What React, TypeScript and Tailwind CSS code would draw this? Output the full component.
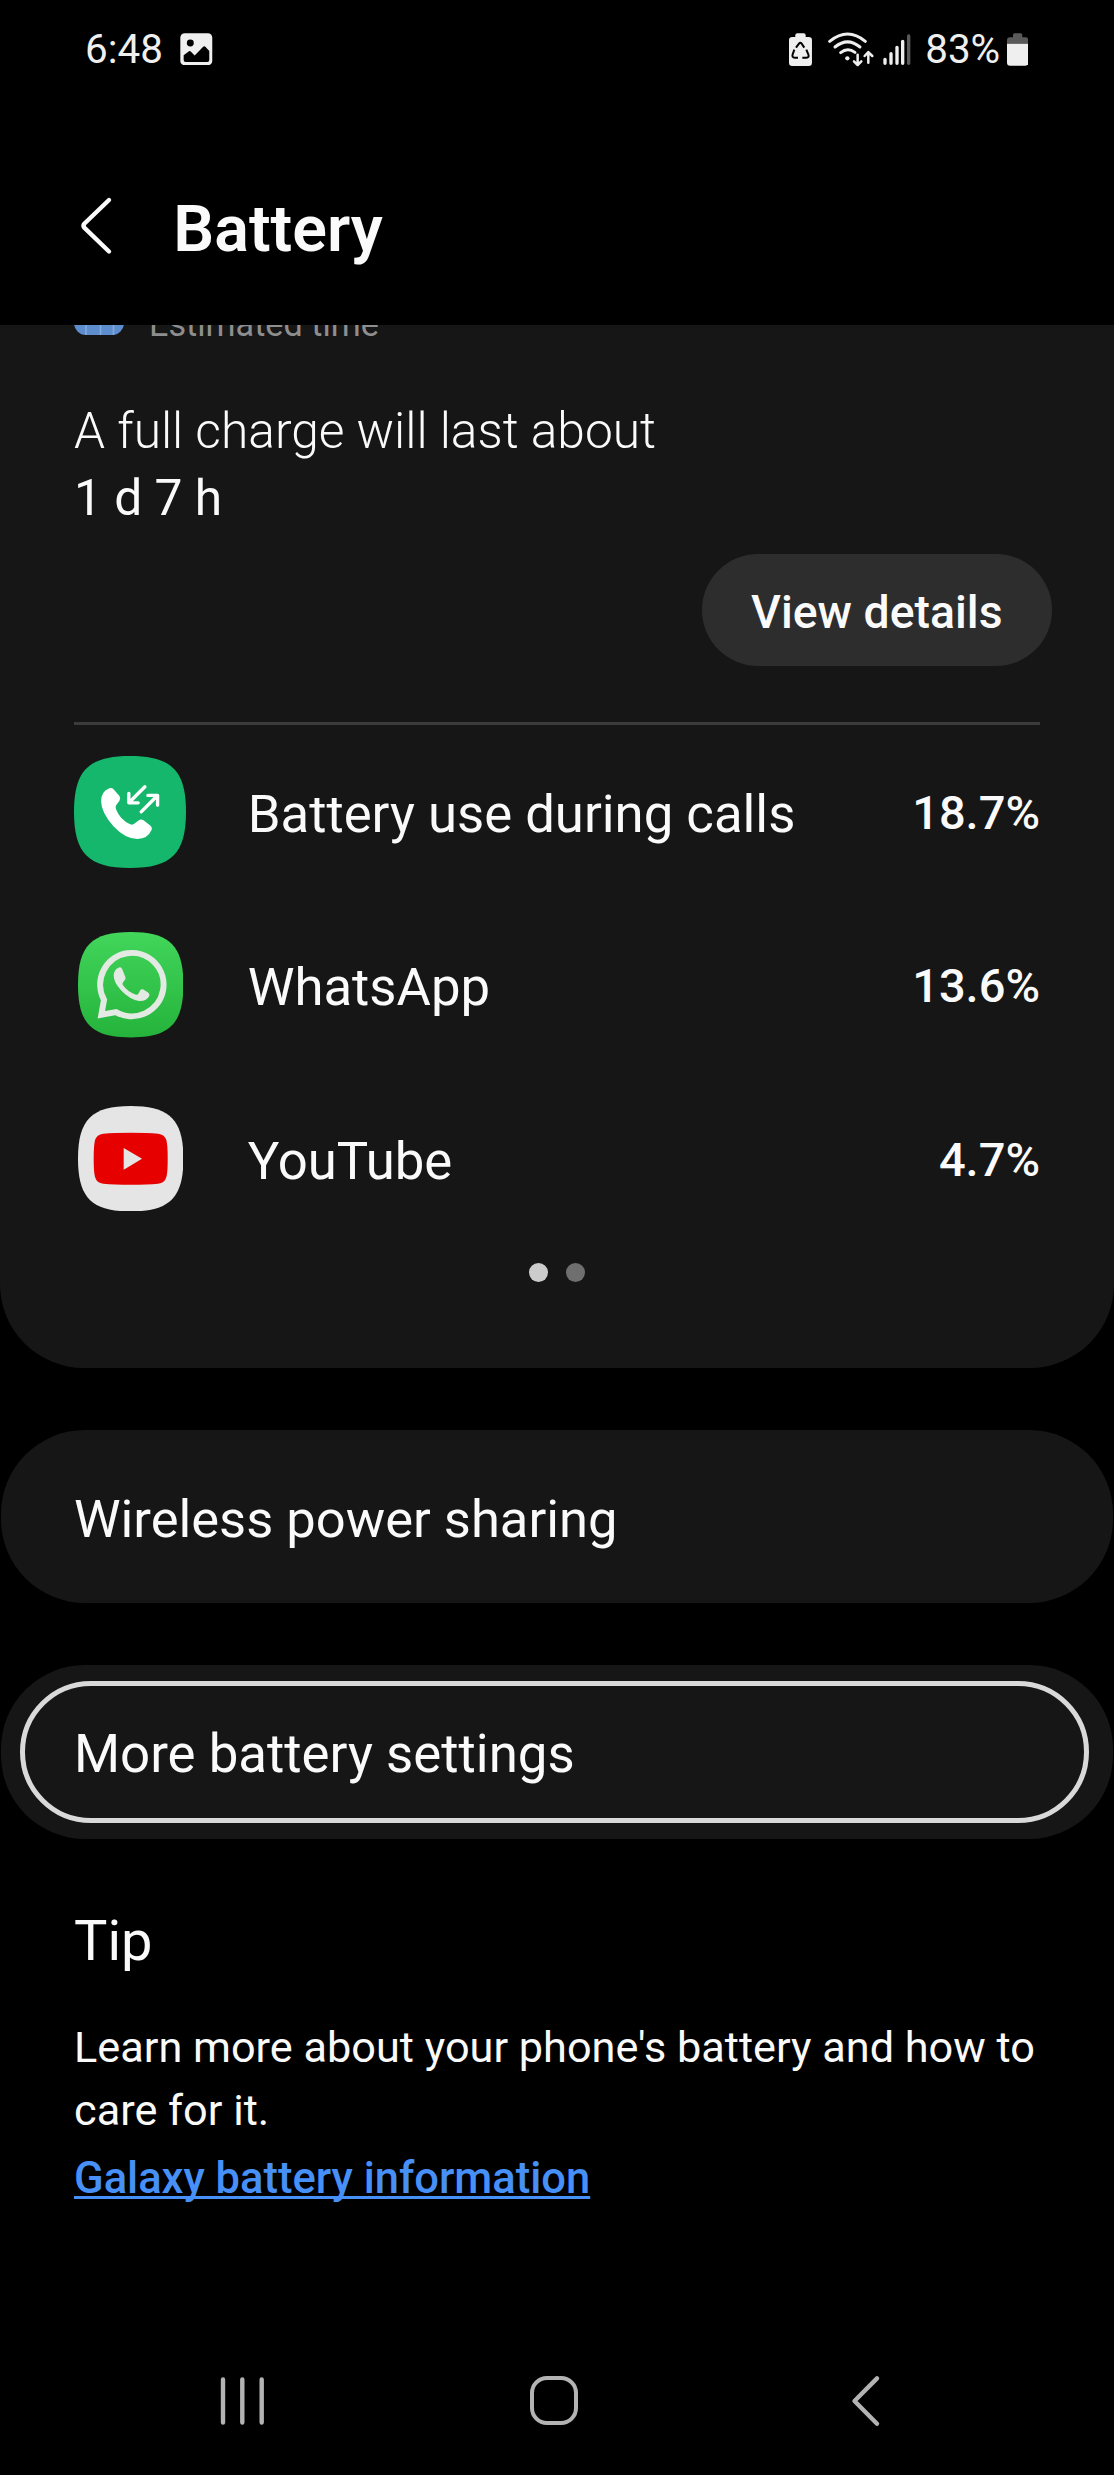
import type { ReactNode } from "react";

const SQUIRCLE = "M0 50C0 13 13 0 50 0S100 13 100 50 87 100 50 100 0 87 0 50Z";

function StatusBar() {
  return (
    <div className="flex h-[98px] items-center justify-between pl-[85px] pr-[85.7px] text-[40.4px] leading-[48px] text-[#efefef]">
      <div className="flex items-center">
        <span className="w-[95px] pt-[2px]">6:48</span>
        <svg className="h-[32.6px] w-[32.6px]" viewBox="390 68 98 98">
          <rect x="391" y="69" width="96" height="96" rx="13" fill="#efefef" />
          <circle cx="421" cy="98" r="10.5" fill="#000" />
          <path d="M401 135L417 123Q420 121 423 124L434 136 459 110Q463 106 467 110L478 122V149Q478 155 472 155H407Q401 155 401 149Z" fill="#000" />
        </svg>
      </div>
      <div className="flex items-center">
        <svg className="h-[33px] w-[23.3px]" viewBox="87 68 70 99">
          <rect x="87" y="80" width="69" height="87" rx="10" fill="#efefef" />
          <rect x="106" y="69" width="31" height="20" rx="6" fill="#efefef" />
          <g fill="none" stroke="#000" strokeWidth="6">
            <path d="M108 112L117 100Q121 95 125 100L133 112" />
            <path d="M103 118L98 132Q95 142 104 142H114" />
            <path d="M139 118L145 132Q149 142 139 142H127" />
          </g>
        </svg>
        <svg className="ml-[14.4px] h-[36.7px] w-[48.3px]" viewBox="200 62 145 110" fill="none" stroke="#efefef" strokeLinecap="round">
          <g strokeWidth="9">
            <path d="M208 93Q262 49 315 93" />
            <path d="M224 110Q262 79 299 110" />
            <path d="M241 127Q262 110 284 126" />
          </g>
          <circle cx="261" cy="144" r="6.5" fill="#efefef" stroke="none" />
          <path d="M292 133V163M281 153L292 164 303 153M324 157V127M313 137L324 125 336 137" strokeWidth="7.5" strokeLinejoin="round" />
        </svg>
        <svg className="ml-[7px] h-[33px] w-[30px]" viewBox="366 67 90 99" fill="none" stroke="#efefef" strokeWidth="10" strokeLinecap="round">
          <path d="M375 146V158M393 129V158M411 110V158M428 92V158" />
          <path d="M446 76V158" stroke="#5a5a5a" />
        </svg>
        <span className="ml-[13px] w-[75px] pt-[2px]">83%</span>
        <svg className="ml-[6.8px] h-[33px] w-[21.3px]" viewBox="741 66 64 99">
          <path d="M741 98V88Q741 79 750 79H759V72Q759 67 764 67H782Q787 67 787 72V79H796Q805 79 805 88V98Z" fill="#5a5a5a" />
          <path d="M741 98H805V155Q805 164 796 164H750Q741 164 741 155Z" fill="#efefef" />
        </svg>
      </div>
    </div>
  );
}

function CallsIcon() {
  return (
    <svg className="h-[112px] w-[112px]" viewBox="72 77 335 335">
      <path d={SQUIRCLE} transform="translate(72 77) scale(3.35)" fill="#15b76c" />
      <path
        d="M176 174Q185 171 191 177L208 197Q213 204 208 211L198 224Q195 229 198 237 210 268 240 281 247 284 252 280L266 269Q273 264 281 270L300 285Q308 292 303 300 292 325 262 325 225 325 190 287 154 247 153 213 153 183 176 174Z"
        fill="#fff"
      />
      <path
        d="M284 169L237 216M236 189V217H264M273 244L321 196M293 195H322V224"
        fill="none"
        stroke="#fff"
        strokeWidth="10"
        strokeLinecap="round"
        strokeLinejoin="round"
      />
    </svg>
  );
}

function WhatsAppIcon() {
  return (
    <svg className="ml-[0.6px] h-[105.4px] w-[105.4px]" viewBox="82 605 316 316">
      <defs>
        <linearGradient id="wa" x1="0" y1="0" x2="0" y2="1">
          <stop offset="0" stopColor="#42d65b" />
          <stop offset="1" stopColor="#25b33b" />
        </linearGradient>
      </defs>
      <path d={SQUIRCLE} transform="translate(82 605) scale(3.16)" fill="url(#wa)" />
      <path d="M152 853L160 808A95 95 0 1 1 196 845Z" fill="none" stroke="#e3eae3" strokeWidth="18" />
      <path
        d="M203 712Q210 709 214 715L224 740Q226 745 222 750L216 757Q214 760 217 765 232 786 256 793 260 794 263 790L269 779Q272 775 277 777L293 787Q297 790 296 796 288 813 265 812 237 808 211 780 189 756 189 735 190 718 203 712Z"
        fill="#e3eae3"
      />
    </svg>
  );
}

function YouTubeIcon() {
  return (
    <svg className="ml-[0.6px] h-[105.4px] w-[105.4px]" viewBox="82 1126 316 316">
      <path d={SQUIRCLE} transform="translate(82 1126) scale(3.16)" fill="#e5e5e5" />
      <path
        d="M129 1284Q129 1244 133 1229 138 1211 158 1209 190 1206 240 1206T322 1209Q342 1211 347 1229 351 1244 351 1284T347 1339Q342 1357 322 1359 290 1362 240 1362T158 1359Q138 1357 133 1339 129 1324 129 1284Z"
        fill="#e60000"
      />
      <path d="M219 1252L274 1284 219 1317Z" fill="#e5e5e5" />
    </svg>
  );
}

function UsageRow({ icon, name, value }: { icon: ReactNode; name: string; value: string }) {
  return (
    <div className="flex h-[173.3px] items-center">
      <div className="flex w-[112px] justify-center">{icon}</div>
      <span className="ml-[61.7px] flex-1 pt-[5px] text-[52.7px] leading-[62px]">{name}</span>
      <span className="pt-[3px] text-[47px] font-[550] leading-[56px]">{value}</span>
    </div>
  );
}

export default function App() {
  return (
    <div className="flex h-[2475px] w-[1114px] flex-col overflow-hidden bg-black font-[Roboto,sans-serif] text-[#fafafa]">
      <StatusBar />
      <header className="flex h-[227px] pl-[79px] pt-[96px]">
        <svg className="h-[64px] w-[34px]" viewBox="0 0 34 64" fill="none" stroke="#fafafa" strokeWidth="4.4" strokeLinecap="round" strokeLinejoin="round">
          <path d="M30 6L5.5 29.5Q3.5 31.7 5.5 33.9L30 57.5" />
        </svg>
        <h1 className="ml-[60.3px] pt-[5px] text-[64.5px] font-semibold leading-[60px]">Battery</h1>
      </header>

      <main className="flex-1 overflow-hidden">
        <section className="flow-root h-[1043px] rounded-b-[84px] bg-[#161616] px-[74px]">
          <div className="-mt-[40px] flex h-[50px]">
            <svg className="h-[50px] w-[50px]" viewBox="0 0 50 50">
              <rect width="50" height="50" rx="12" fill="#5e8dcd" />
              <path d="M12 0V50M26.5 0V50M39.5 0V50" stroke="#84a9dc" strokeWidth="1.6" />
            </svg>
            <span className="ml-[25px] mt-[19px] text-[34.2px] leading-[40px] text-[#8e8e8e]">Estimated time</span>
          </div>
          <div className="mt-[62.5px] text-[49.7px] leading-[67px]">
            <p className="font-light">A full charge will last about</p>
            <p className="font-[450]">1 d 7 h</p>
          </div>
          <button className="-mr-3 ml-auto mt-[22.5px] flex h-[112px] w-[350.5px] items-center justify-center rounded-full bg-[#2d2d2d] pt-[3px] text-[46.4px] font-medium leading-[56px]">
            View details
          </button>
          <div className="mt-[56px] h-[3px] bg-[#3b3b3b]" />
          <UsageRow icon={<CallsIcon />} name="Battery use during calls" value="18.7%" />
          <UsageRow icon={<WhatsAppIcon />} name="WhatsApp" value="13.6%" />
          <UsageRow icon={<YouTubeIcon />} name="YouTube" value="4.7%" />
          <div className="mt-[18px] flex justify-center gap-[18.4px]">
            <span className="h-[19px] w-[19px] rounded-full bg-[#cccccc]" />
            <span className="h-[19px] w-[19px] rounded-full bg-[#6f6f6f]" />
          </div>
        </section>

        <section className="mx-px mt-[62px] flex h-[173.3px] items-center rounded-[84px] bg-[#161616] pl-[73px] pt-[5px] text-[52.5px] leading-[62px]">
          Wireless power sharing
        </section>

        <section className="mx-px mt-[62px] h-[173.3px] rounded-[84px] bg-[#161616] pl-[19px] pr-[24px] pt-[15.4px]">
          <div className="flex h-[142.6px] items-center rounded-full border-[5px] border-[#d9d9d9] pl-[49px] pt-[5px] text-[52.8px] leading-[62px]">
            More battery settings
          </div>
        </section>

        <section className="px-[74px] pt-[70.5px]">
          <h2 className="text-[56px] leading-[64px]">Tip</h2>
          <p className="mt-[43.4px] whitespace-nowrap text-[43.25px] leading-[63px]">
            Learn more about your phone's battery and how to
            <br />
            care for it.
          </p>
          <a className="mt-[4.5px] block text-[43.5px] font-medium leading-[63px] text-[#4690f7] underline decoration-[2.7px] underline-offset-[3px] [text-decoration-skip-ink:none]">
            Galaxy battery information
          </a>
        </section>
      </main>

      <nav className="flex h-[149px] items-center pl-[220px]">
        <svg className="h-[50px] w-[44px]" viewBox="0 0 44 50" stroke="#b3b3b3" strokeWidth="4.4" strokeLinecap="round">
          <path d="M3 3.4V46.6M22.3 3.4V46.6M41.7 3.4V46.6" />
        </svg>
        <div className="ml-[265.7px] h-[48.6px] w-[48.4px] rounded-[17px] border-[4.5px] border-[#b3b3b3]" />
        <svg className="ml-[271px] h-[52px] w-[34px]" viewBox="0 0 34 52" fill="none" stroke="#b3b3b3" strokeWidth="4.4" strokeLinecap="round" strokeLinejoin="round">
          <path d="M28 3.4L5.5 26 28 48.8" />
        </svg>
      </nav>
    </div>
  );
}
